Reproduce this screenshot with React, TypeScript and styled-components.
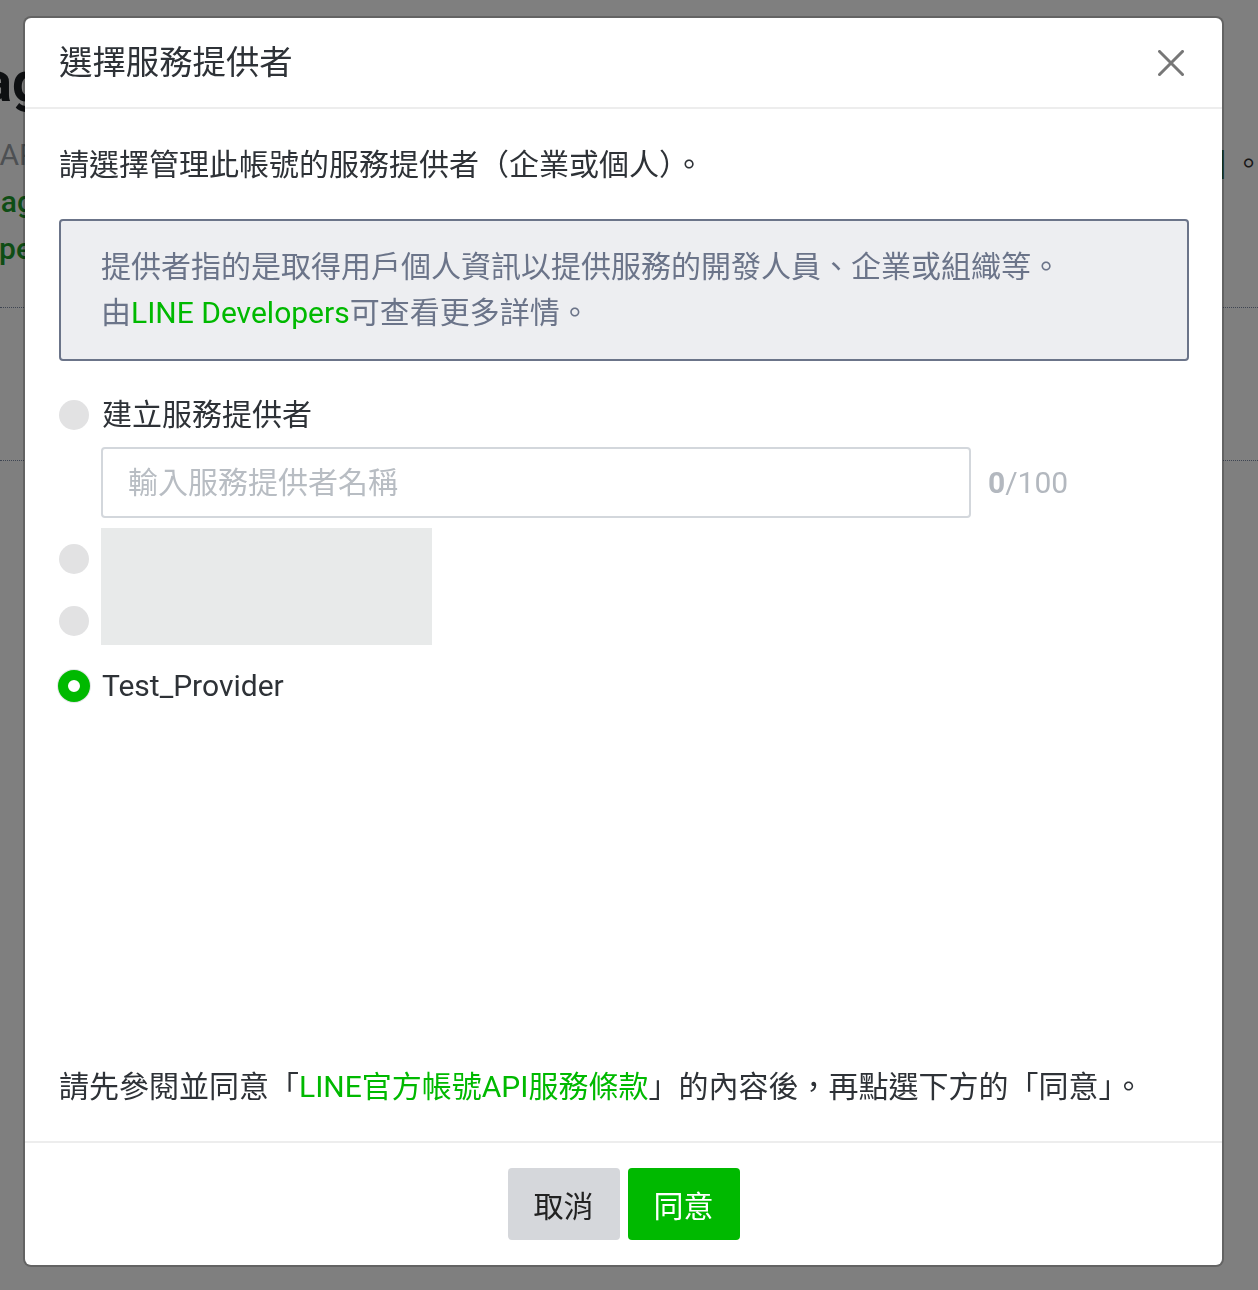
import React from "react";
import styled, { createGlobalStyle } from "styled-components";

const GlobalStyle = createGlobalStyle`
  html, body { margin: 0; padding: 0; overflow: hidden; }
  body { font-family: Roboto, "Noto Sans CJK TC", sans-serif; background: #fff; }
  * { box-sizing: border-box; }
`;

const FONT = `Roboto, "Noto Sans CJK TC", sans-serif`;

/* ---------- background page ---------- */
const Page = styled.div`
  width: 1258px;
  height: 1290px;
  background: #fff;
  color: #222;
`;

const TopSection = styled.div`
  height: 308px;
  display: flex;
  justify-content: space-between;
  border-bottom: 1px dotted #7d8aa5;
`;

const LeftFrag = styled.div`
  width: 44px;
  overflow: hidden;
  display: flex;
  flex-direction: column;
  align-items: flex-end;
  padding-top: 50px;
`;

const RightFrag = styled.div`
  width: 40px;
  overflow: hidden;
  display: flex;
  flex-direction: column;
  align-items: flex-start;
  padding-top: 140px;
`;

const BgHeading = styled.div`
  font-size: 56px;
  font-weight: 700;
  line-height: 64px;
  color: #1d2125;
  white-space: nowrap;
`;

const BgLine = styled.div<{ $tone: "gray" | "green" | "dark"; $inset?: number }>`
  font-size: 30px;
  line-height: 47px;
  white-space: nowrap;
  margin-right: ${(p) => p.$inset ?? 0}px;
  font-weight: ${(p) => (p.$tone === "green" ? 500 : 400)};
  color: ${(p) => (p.$tone === "green" ? "#1c9a2a" : p.$tone === "gray" ? "#9aa0a6" : "#333")};
`;

const BgSpacer = styled.div`
  height: 17px;
`;

const MidSection = styled.div`
  height: 153px;
  border-bottom: 1px dotted #7d8aa5;
`;

/* ---------- modal ---------- */
const Overlay = styled.div`
  position: fixed;
  inset: 0;
  background: rgba(0, 0, 0, 0.5);
  display: flex;
  align-items: flex-start;
  padding: 18px 0 0 25px;
`;

const Modal = styled.div`
  width: 1197px;
  height: 1247px;
  background: #fff;
  border-radius: 6px;
  box-shadow: 0 0 0 2px rgba(0, 0, 0, 0.22);
  display: flex;
  flex-direction: column;
  overflow: hidden;
  font-family: ${FONT};
  color: #2e3237;
`;

const Header = styled.div`
  height: 91px;
  flex: none;
  display: flex;
  align-items: center;
  justify-content: space-between;
  padding: 0 38px 0 34px;
  border-bottom: 2px solid #ededed;
`;

const Title = styled.h2`
  margin: 0;
  font-size: 33.4px;
  font-weight: 400;
  line-height: 46px;
  color: #2e3237;
`;

const CloseButton = styled.button`
  width: 26px;
  height: 26px;
  padding: 0;
  border: 0;
  background: none;
  display: flex;
  cursor: pointer;
`;

const Body = styled.div`
  flex: 1;
  display: flex;
  flex-direction: column;
  padding: 33px 33px 32px 34px;
`;

const Lead = styled.p`
  margin: 0;
  font-size: 30px;
  line-height: 45px;
`;

const InfoBox = styled.div`
  margin-top: 32px;
  border: 2px solid #6b7489;
  border-radius: 4px;
  background: #edeef1;
  padding: 23px 40px;
  color: #6b7489;
  font-size: 30px;
  line-height: 46px;
`;

const Link = styled.a`
  color: #00b900;
  text-decoration: none;
`;

const RadioRow = styled.label<{ $gap: number }>`
  display: flex;
  align-items: center;
  gap: 13px;
  height: 45px;
  margin-top: ${(p) => p.$gap}px;
  font-size: 30px;
`;

const Radio = styled.span<{ $checked?: boolean }>`
  flex: none;
  width: ${(p) => (p.$checked ? 32 : 30)}px;
  height: ${(p) => (p.$checked ? 32 : 30)}px;
  margin: ${(p) => (p.$checked ? "0 -1px 0 -1px" : "0")};
  border-radius: 50%;
  background: ${(p) => (p.$checked ? "#fff" : "#e2e2e3")};
  border: ${(p) => (p.$checked ? "10px solid #00b900" : "none")};
  box-shadow: ${(p) => (p.$checked ? "0 0 0 1px #e4e6e8" : "none")};
`;

const RadioLabel = styled.span`
  font-size: 30px;
  line-height: 45px;
  color: #2e3237;
`;

const NameField = styled.div`
  display: flex;
  align-items: center;
  gap: 17px;
  margin: 10px 0 0 42px;
`;

const NameInput = styled.input`
  width: 870px;
  height: 71px;
  border: 2px solid #d3d7dc;
  border-radius: 4px;
  padding: 0 25px;
  font-family: ${FONT};
  font-size: 30px;
  color: #2e3237;
  outline: none;
  &::placeholder {
    color: #b8bdc3;
  }
`;

const Counter = styled.span`
  font-size: 30px;
  color: #b3b8bf;
  b {
    font-weight: 700;
  }
`;

const RedactedGroup = styled.div`
  display: flex;
  gap: 12px;
  margin-top: 10px;
`;

const RadioStack = styled.div`
  display: flex;
  flex-direction: column;
  gap: 32px;
  padding-top: 16px;
`;

const Redaction = styled.div`
  width: 331px;
  height: 117px;
  background: #e8eaea;
`;

const Note = styled.p`
  margin: auto 0 0;
  font-size: 30px;
  line-height: 45px;
`;

const Footer = styled.div`
  flex: none;
  border-top: 2px solid #ededed;
  padding: 25px 0;
  display: flex;
  justify-content: center;
  gap: 8px;
`;

const Button = styled.button<{ $primary?: boolean }>`
  width: 112px;
  height: 72px;
  border: 0;
  border-radius: 4px;
  font-family: ${FONT};
  font-size: 30px;
  background: ${(p) => (p.$primary ? "#00b900" : "#d5d7db")};
  color: ${(p) => (p.$primary ? "#fff" : "#222")};
  cursor: pointer;
`;

function CloseIcon() {
  return (
    <svg width="26" height="26" viewBox="0 0 26 26">
      <path d="M1.5 1.5 L24.5 24.5 M24.5 1.5 L1.5 24.5" stroke="#777" strokeWidth="3" strokeLinecap="square" fill="none" />
    </svg>
  );
}

export default function App() {
  return (
    <>
      <GlobalStyle />
      <Page>
        <TopSection>
          <LeftFrag>
            <BgHeading>Messag</BgHeading>
            <BgSpacer />
            <BgLine $tone="gray" $inset={6}>Messaging AP</BgLine>
            <BgLine $tone="green" $inset={10}>Messag</BgLine>
            <BgLine $tone="green" $inset={12}>Develope</BgLine>
          </LeftFrag>
          <RightFrag>
            <BgLine $tone="dark">
              <span style={{ color: "#3a7a44" }}>]</span> 。
            </BgLine>
          </RightFrag>
        </TopSection>
        <MidSection />
      </Page>

      <Overlay>
        <Modal role="dialog">
          <Header>
            <Title>選擇服務提供者</Title>
            <CloseButton aria-label="close">
              <CloseIcon />
            </CloseButton>
          </Header>
          <Body>
            <Lead>請選擇管理此帳號的服務提供者（企業或個人）。</Lead>
            <InfoBox>
              提供者指的是取得用戶個人資訊以提供服務的開發人員、企業或組織等。
              <br />
              由<Link href="#">LINE Developers</Link>可查看更多詳情。
            </InfoBox>

            <RadioRow $gap={31}>
              <Radio />
              <RadioLabel>建立服務提供者</RadioLabel>
            </RadioRow>
            <NameField>
              <NameInput placeholder="輸入服務提供者名稱" />
              <Counter>
                <b>0</b>/100
              </Counter>
            </NameField>

            <RedactedGroup>
              <RadioStack>
                <Radio />
                <Radio />
              </RadioStack>
              <Redaction />
            </RedactedGroup>

            <RadioRow $gap={18}>
              <Radio $checked />
              <RadioLabel>Test_Provider</RadioLabel>
            </RadioRow>

            <Note>
              請先參閱並同意「<Link href="#">LINE官方帳號API服務條款</Link>」的內容後，再點選下方的「同意」。
            </Note>
          </Body>
          <Footer>
            <Button>取消</Button>
            <Button $primary>同意</Button>
          </Footer>
        </Modal>
      </Overlay>
    </>
  );
}
